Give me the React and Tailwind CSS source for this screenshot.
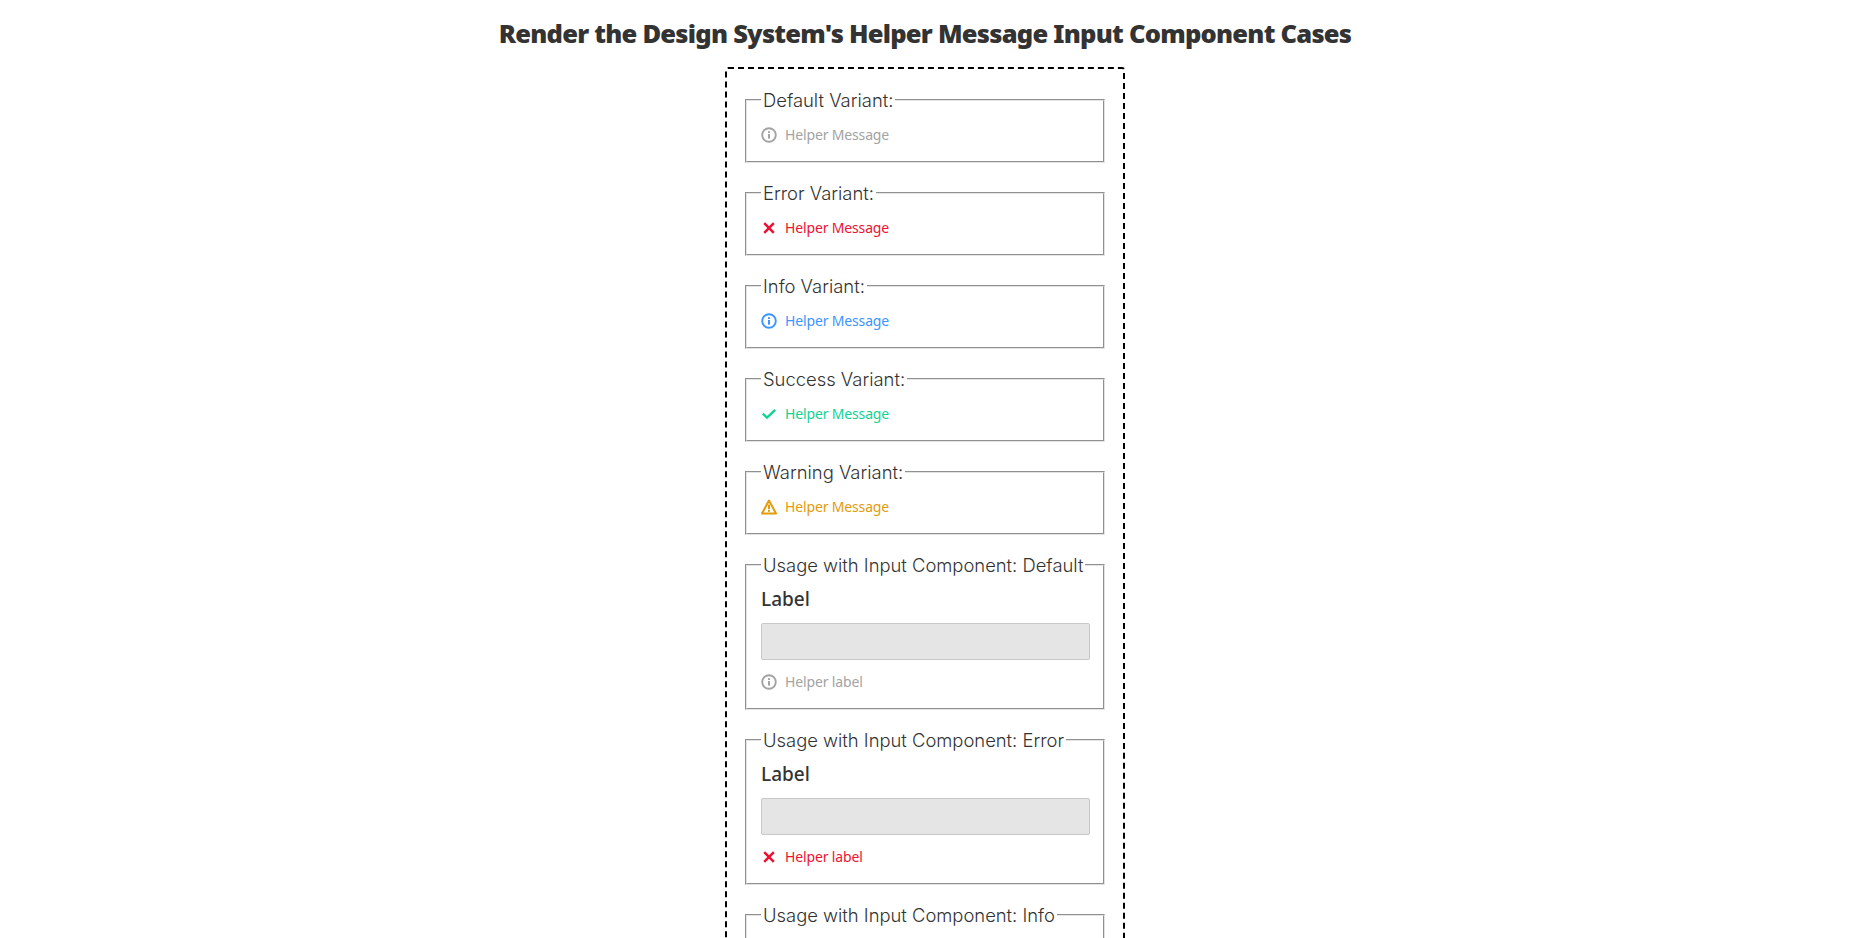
const COLORS = {
  default: "text-[#a3a3a3]",
  error: "text-[#ee1133]",
  info: "text-[#3d94ff]",
  success: "text-[#10d395]",
  warning: "text-[#e39b0b]",
};

function InfoIcon() {
  return (
    <svg width="16" height="16" viewBox="0 0 16 16" fill="none">
      <circle cx="8" cy="8" r="6.8" stroke="currentColor" strokeWidth="1.9" />
      <rect x="7" y="7" width="2" height="4.6" fill="currentColor" />
      <rect x="7" y="4.2" width="2" height="1.8" fill="currentColor" />
    </svg>
  );
}
function ErrorIcon() {
  return (
    <svg width="16" height="16" viewBox="0 0 16 16" fill="none">
      <path d="M3.2 3.2 12.8 12.8M12.8 3.2 3.2 12.8" stroke="currentColor" strokeWidth="2.5" />
    </svg>
  );
}
function SuccessIcon() {
  return (
    <svg width="16" height="16" viewBox="0 0 16 16" fill="none">
      <path d="M1.8 7.6 6 11.6 14.2 3.8" stroke="currentColor" strokeWidth="2.4" />
    </svg>
  );
}
function WarningIcon() {
  return (
    <svg width="16" height="16" viewBox="0 0 16 16" fill="none">
      <path d="M8 1.6 15 14.4H1Z" stroke="currentColor" strokeWidth="2" strokeLinejoin="round" />
      <rect x="7" y="5.6" width="2" height="4.6" fill="currentColor" />
      <rect x="7" y="11" width="2" height="1.8" fill="currentColor" />
    </svg>
  );
}
const ICONS = { default: InfoIcon, error: ErrorIcon, info: InfoIcon, success: SuccessIcon, warning: WarningIcon };

function Helper({ variant, text }) {
  const Icon = ICONS[variant];
  return (
    <div className={`flex items-center gap-2 h-[20px] text-sm leading-5 tracking-[-0.15px] ${COLORS[variant]}`}>
      <Icon />
      <span>{text}</span>
    </div>
  );
}

function Case({ title, children }) {
  return (
    <fieldset className="border-2 [border-style:groove] border-[#e4e4e4] pl-[14px] pr-[13px] pt-[13px] pb-[16px] mb-[18px]">
      <legend className="px-0.5 font-['Inter',sans-serif] text-[18.4px] font-light leading-6 text-[#333333]">{title}</legend>
      {children}
    </fieldset>
  );
}

function InputCase({ variant }) {
  return (
    <div className="flex flex-col">
      <label className="text-[19px] font-medium leading-[19px] text-[#333333] mb-[13.5px]">Label</label>
      <div className="h-[37px] bg-[#e5e5e5] border border-[#c8c8c8] rounded-[2px] mb-[12.5px]" />
      <Helper variant={variant} text="Helper label" />
    </div>
  );
}

export default function App() {
  const variants = [
    ["Default Variant:", "default"],
    ["Error Variant:", "error"],
    ["Info Variant:", "info"],
    ["Success Variant:", "success"],
    ["Warning Variant:", "warning"],
  ];
  const inputs = [
    ["Usage with Input Component: Default", "default"],
    ["Usage with Input Component: Error", "error"],
    ["Usage with Input Component: Info", "info"],
    ["Usage with Input Component: Success", "success"],
    ["Usage with Input Component: Warning", "warning"],
  ];
  return (
    <div className="bg-white font-['Noto_Sans',sans-serif] flex flex-col items-center">
      <h1 className="font-['Noto_Sans',sans-serif] font-black text-[25.5px] tracking-[-0.76px] leading-9 text-[#333333] mt-[15px] mb-[16px]">
        Render the Design System's Helper Message Input Component Cases
      </h1>
      <div className="w-[400px] border-2 border-dashed border-black rounded-[3px] pt-[19px] px-[18px]">
        {variants.map(([t, v]) => (
          <Case key={v} title={t}>
            <Helper variant={v} text="Helper Message" />
          </Case>
        ))}
        {inputs.map(([t, v]) => (
          <Case key={v} title={t}>
            <InputCase variant={v} />
          </Case>
        ))}
      </div>
    </div>
  );
}
